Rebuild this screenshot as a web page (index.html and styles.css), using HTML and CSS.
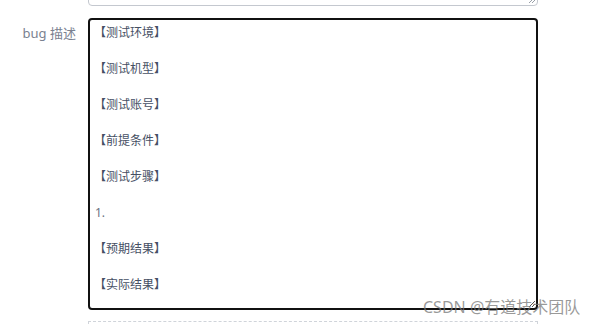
FILE: index.html
```html
<!DOCTYPE html>
<html lang="zh-CN">
<head>
<meta charset="utf-8">
<link rel="stylesheet" href="styles.css">
</head>
<body>
<div class="page">
  <div class="prev-field">
    <svg class="grip" width="10" height="10" viewBox="0 0 10 10">
      <line x1="9" y1="3" x2="3" y2="9" stroke="#9aa0a8" stroke-width="1"/>
      <line x1="9" y1="6" x2="6" y2="9" stroke="#9aa0a8" stroke-width="1"/>
    </svg>
  </div>
  <div class="form-row">
    <label class="label">bug 描述</label>
    <div class="editor">
      <p>【测试环境】</p>
      <p>【测试机型】</p>
      <p>【测试账号】</p>
      <p>【前提条件】</p>
      <p>【测试步骤】</p>
      <p class="num">1.</p>
      <p>【预期结果】</p>
      <p>【实际结果】</p>
      <svg class="grip grip-main" width="10" height="10" viewBox="0 0 10 10">
        <line x1="9" y1="3" x2="3" y2="9" stroke="#555" stroke-width="1"/>
        <line x1="9" y1="6" x2="6" y2="9" stroke="#555" stroke-width="1"/>
      </svg>
    </div>
  </div>
  <div class="upload"></div>
  <div class="watermark">CSDN @有道技术团队</div>
</div>
</body>
</html>
```

FILE: styles.css
```css
html, body {
  margin: 0;
  padding: 0;
  background: #ffffff;
}
.page {
  position: relative;
  width: 595px;
  height: 325px;
  overflow: hidden;
  font-family: "Noto Sans", "Noto Sans CJK SC", sans-serif;
}
.prev-field {
  position: relative;
  margin-top: -24px;
  margin-left: 88px;
  width: 450px;
  height: 30px;
  box-sizing: border-box;
  border: 1px solid #c4c8cf;
  border-radius: 4px;
}
.grip {
  position: absolute;
  right: 1px;
  bottom: 1px;
}
.form-row {
  display: flex;
  margin-top: 12px;
}
.label {
  width: 76px;
  padding-right: 12px;
  text-align: right;
  font-size: 13px;
  line-height: 20px;
  padding-top: 5px;
  color: #7a8190;
}
.editor {
  position: relative;
  width: 450px;
  height: 292px;
  box-sizing: border-box;
  border: 2px solid #111111;
  border-radius: 4px;
  padding: 3px 4px 0 4px;
  overflow: hidden;
}
.editor p {
  margin: 0 0 16px 0;
  font-size: 12px;
  line-height: 20px;
  color: #465064;
}
.editor p.num {
  padding-left: 1px;
  color: #6a7282;
}
.grip-main {
  right: 0;
  bottom: 0;
}
.upload {
  margin-top: 11px;
  margin-left: 88px;
  width: 450px;
  height: 20px;
  box-sizing: border-box;
  border: 1px dashed #d0d4da;
}
.watermark {
  position: absolute;
  left: 423px;
  top: 297px;
  font-size: 16px;
  line-height: 20px;
  color: rgba(120, 120, 120, 0.75);
  white-space: nowrap;
}
```
